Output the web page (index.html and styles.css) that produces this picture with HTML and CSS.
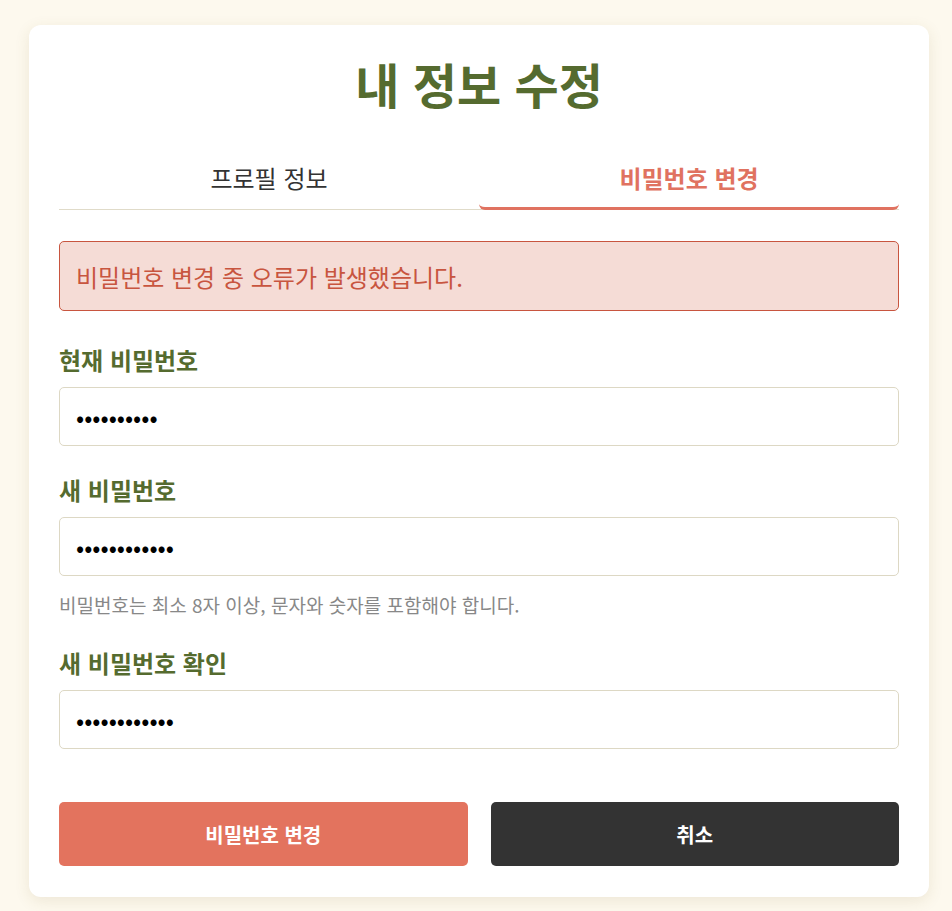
FILE: index.html
```html
<!DOCTYPE html>
<html lang="ko">
<head>
<meta charset="utf-8">
<title>내 정보 수정</title>
<link rel="stylesheet" href="styles.css">
</head>
<body>
<div class="card">
  <h1 class="title">내 정보 수정</h1>
  <div class="tabs">
    <div class="tab">프로필 정보</div>
    <div class="tab active">비밀번호 변경</div>
  </div>
  <div class="alert">비밀번호 변경 중 오류가 발생했습니다.</div>
  <form class="form">
    <div class="field">
      <label class="label">현재 비밀번호</label>
      <input class="input" type="password" value="abcdefghij">
    </div>
    <div class="field">
      <label class="label">새 비밀번호</label>
      <input class="input" type="password" value="abcdefghijkl">
      <div class="hint">비밀번호는 최소 8자 이상, 문자와 숫자를 포함해야 합니다.</div>
    </div>
    <div class="field">
      <label class="label">새 비밀번호 확인</label>
      <input class="input" type="password" value="abcdefghijkl">
    </div>
    <div class="actions">
      <button type="button" class="btn btn-primary">비밀번호 변경</button>
      <button type="button" class="btn btn-dark">취소</button>
    </div>
  </form>
</div>
</body>
</html>
```
FILE: styles.css
```css
* { box-sizing: border-box; }
html, body { margin: 0; padding: 0; }
body {
  background: #fdf9ee;
  font-family: "Noto Sans CJK KR", "Noto Sans", sans-serif;
  padding: 25px 23px 14px 29px;
}
.card {
  width: 900px;
  background: #ffffff;
  border-radius: 12px;
  box-shadow: 0 4px 15px rgba(120, 100, 40, 0.12);
  padding: 30px 30px 31px;
}
.title {
  margin: 0;
  text-align: center;
  font-size: 48px;
  font-weight: 700;
  color: #556b2f;
  line-height: 56px;
}
.tabs {
  display: grid;
  grid-template-columns: 1fr 1fr;
  border-bottom: 1px solid #e0dbc9;
  margin-top: 39px;
}
.tab {
  text-align: center;
  font-size: 24px;
  color: #333333;
  padding: 10px 0 11px;
  line-height: 36px;
  border-bottom: 3px solid transparent;
  margin-bottom: -1px;
}
.tab.active {
  color: #e07260;
  font-weight: 700;
  border-bottom-color: #e07260;
  border-radius: 0 0 6px 6px;
}
.alert {
  margin-top: 31px;
  background: #f5dcd6;
  border: 1px solid #c8553f;
  border-radius: 5px;
  color: #c8553f;
  font-size: 24px;
  padding: 0 16px;
  height: 70px;
  display: flex;
  align-items: center;
}
.form {
  margin-top: 30px;
  display: flex;
  flex-direction: column;
}
.field {
  display: flex;
  flex-direction: column;
  margin-bottom: 25px;
}
.label {
  font-size: 24px;
  font-weight: 700;
  color: #556b2f;
  line-height: 38px;
  margin-bottom: 8px;
}
.input {
  height: 59px;
  border: 1px solid #ddd8c4;
  border-radius: 5px;
  padding: 0 16px;
  font-size: 24px;
  font-family: "Noto Sans CJK KR", sans-serif;
  color: #000;
  background: #fff;
  outline: none;
}
.hint {
  font-size: 19px;
  color: #888888;
  margin-top: 15px;
  line-height: 28px;
}
.actions {
  display: grid;
  grid-template-columns: 1fr 1fr;
  gap: 23px;
  margin-top: 28px;
}
.btn {
  height: 64px;
  border: none;
  border-radius: 5px;
  color: #ffffff;
  font-family: "Noto Sans CJK KR", sans-serif;
  font-size: 20px;
  font-weight: 700;
}
.btn-primary { background: #e3735e; }
.btn-dark { background: #333333; }
```
